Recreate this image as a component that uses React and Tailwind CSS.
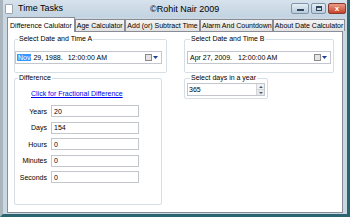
import React from 'react'

const font = { fontFamily: '"Liberation Sans", Arial, sans-serif' }

const tabs = [
  { label: 'Difference Calulator', w: 'w-[68px]', active: true },
  { label: 'Age Calculator', w: 'w-[50px]' },
  { label: 'Add (or) Subtract Time', w: 'w-[76px]' },
  { label: 'Alarm And Countdown', w: 'w-[73px]' },
  { label: 'About Date Calculator', w: 'w-[72px]' },
]

const rows = [
  ['Years', '20'],
  ['Days', '154'],
  ['Hours', '0'],
  ['Minutes', '0'],
  ['Seconds', '0'],
]

const CalendarDrop = () => (
  <div className="flex items-center gap-[1px] pr-[3px]">
    <div className="w-[7px] h-[7px] border border-[#8a8a8a] bg-[#e4e4e4]" />
    <svg width="5" height="3" viewBox="0 0 5 3">
      <path d="M0 0h5L2.5 3z" fill="#1f3f8f" />
    </svg>
  </div>
)

const DatePicker = ({ date, time, timeGap }) => (
  <div className="h-[13px] border border-[#c3c6cc] bg-white flex items-center justify-between">
    <div className="flex items-center text-[7px] leading-none text-black">
      {date}
      <span className={timeGap}>{time}</span>
    </div>
    <CalendarDrop />
  </div>
)

const Group = ({ title, className = '', children }) => (
  <fieldset className={`border border-[#d5dfe5] rounded-[2px] ${className}`}>
    <legend className="ml-[3px] px-[1px] text-[7px] leading-[8px] text-black">{title}</legend>
    {children}
  </fieldset>
)

export default function App() {
  return (
    <div
      className="w-[350px] h-[217px] bg-[#c9d7e3] flex flex-col border-l-[3px] border-l-[#a9b4bd] border-r-[3px] border-r-[#2b6471] border-b-[3px] border-b-[#2b6471] overflow-hidden"
      style={font}
    >
      {/* Title bar */}
      <div className="h-[17px] flex items-center bg-gradient-to-b from-[#d6e2ec] to-[#c3d3e1] relative">
        <div className="w-[8px] h-[10px] ml-[2px] bg-white border border-[#9aa6b0] rounded-[1px]" />
        <span className="ml-[5px] text-[9px] text-black">Time Tasks</span>
        <span className="absolute left-[147px] top-[3px] text-[9px] text-black">©Rohit Nair 2009</span>
        <div className="ml-auto mr-[1px] flex items-center gap-[2px]">
          <div className="w-[18px] h-[11px] rounded-[2px] border border-[#7f95a8] bg-gradient-to-b from-[#e6eef5] to-[#b9cadb] flex items-end justify-center pb-[2px]">
            <div className="w-[7px] h-[2px] bg-[#30465c]" />
          </div>
          <div className="w-[15px] h-[11px] rounded-[2px] border border-[#7f95a8] bg-gradient-to-b from-[#e6eef5] to-[#b9cadb] flex items-center justify-center">
            <div className="w-[6px] h-[5px] border border-[#30465c] border-t-2" />
          </div>
          <div className="w-[18px] h-[11px] rounded-[2px] border border-[#8a3a2e] bg-gradient-to-b from-[#e99a86] to-[#c4432c] flex items-center justify-center">
            <span className="text-white text-[8px] font-bold leading-none">x</span>
          </div>
        </div>
      </div>

      {/* Body */}
      <div className="flex-1 flex flex-col px-[2px] pb-[1px]">
        {/* Tabs */}
        <div className="flex items-end h-[14px] pl-[2px]">
          {tabs.map((t) => (
            <div
              key={t.label}
              className={`${t.w} flex items-center justify-center border border-[#898c95] border-b-0 text-[7px] leading-none text-black whitespace-nowrap ${
                t.active ? 'h-[15px] bg-white relative z-10 -mb-[1px]' : 'h-[12px] bg-gradient-to-b from-[#f4f4f4] to-[#e2e2e2]'
              }`}
            >
              {t.label}
            </div>
          ))}
        </div>

        {/* Panel */}
        <div className="flex-1 bg-white border border-[#898c95] ml-[2px] mr-[2px] grid grid-cols-[153px_150px] gap-x-[17px] px-[6px] pt-[3px] pb-[7px]">
          <div className="flex flex-col gap-[1px]">
            <Group title="Select Date and Time A" className="h-[38px] pl-[0px] pr-[4px] pt-[8px]">
              <DatePicker
                date={
                  <>
                    <span className="bg-[#3399ff] text-white px-[1px] ml-[1px]">Nov</span>
                    <span className="ml-[2px]">29, 1988.</span>
                  </>
                }
                time="12:00:00 AM"
                timeGap="ml-[5px]"
              />
            </Group>
            <Group title="Difference" className="w-[148px] flex-1">
              <div className="pt-[8px] pl-[16px] text-[7px] leading-none text-[#0000ee] underline">
                Click for Fractional Difference
              </div>
              <div className="mt-[8px] flex flex-col gap-[4.5px]">
                {rows.map(([label, val]) => (
                  <div key={label} className="flex items-center">
                    <span className="w-[36px] pr-[4px] text-right text-[7px] leading-none">{label}</span>
                    <div className="w-[88px] h-[12px] border border-[#c3c6cc] flex items-center pl-[2px] text-[7px] leading-none">
                      {val}
                    </div>
                  </div>
                ))}
              </div>
            </Group>
          </div>

          <div className="flex flex-col gap-[1px]">
            <Group title="Select Date and Time B" className="h-[38px] px-[2px] pt-[8px]">
              <DatePicker
                date={<span className="ml-[2px]">Apr 27, 2009.</span>}
                time="12:00:00 AM"
                timeGap="ml-[6px]"
              />
            </Group>
            <Group title="Select days in a year" className="w-[84px] h-[25px] px-[2px] pt-[1px]">
              <div className="h-[13px] border border-[#c3c6cc] flex items-center justify-between pl-[1px] text-[7px] leading-none">
                <span>365</span>
                <div className="w-[8px] h-full flex flex-col border-l border-[#d6d6d6]">
                  <div className="flex-1 flex items-center justify-center bg-[#eef2f6] border-b border-[#d6d6d6]">
                    <svg width="4" height="2" viewBox="0 0 4 2"><path d="M0 2h4L2 0z" fill="#4a5a6a" /></svg>
                  </div>
                  <div className="flex-1 flex items-center justify-center bg-[#e3e9ef]">
                    <svg width="4" height="2" viewBox="0 0 4 2"><path d="M0 0h4L2 2z" fill="#4a5a6a" /></svg>
                  </div>
                </div>
              </div>
            </Group>
          </div>
        </div>
      </div>
    </div>
  )
}
